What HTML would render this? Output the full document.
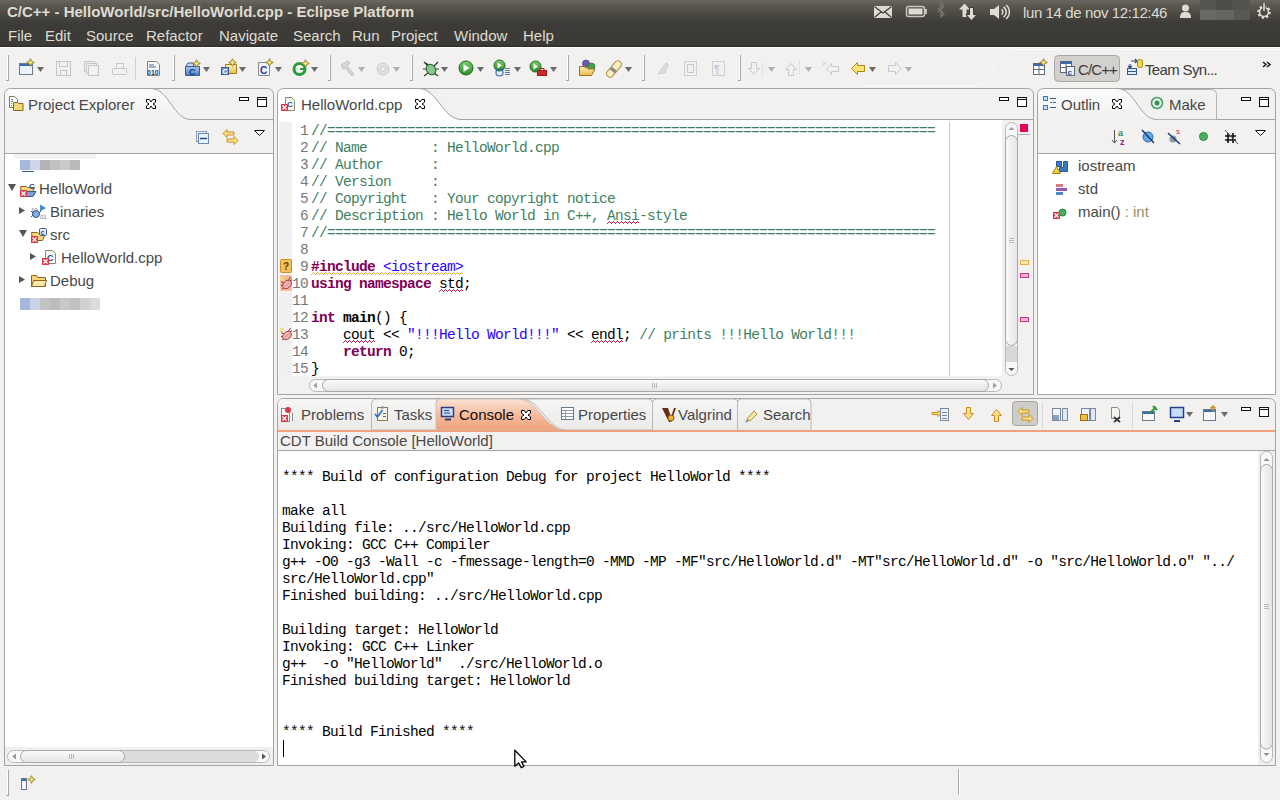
<!DOCTYPE html>
<html><head><meta charset="utf-8">
<style>
*{margin:0;padding:0;box-sizing:border-box}
html,body{width:1280px;height:800px;overflow:hidden;background:#f2f1f0;font-family:"Liberation Sans",sans-serif;font-size:15px;color:#484848}
.a{position:absolute}
.t{position:absolute;white-space:pre;line-height:1}
svg{position:absolute;overflow:visible}
#titlebar{left:0;top:0;width:1280px;height:47px;background:linear-gradient(#6a6661 0px,#5a574e 6px,#4a4943 14px,#3e3d39 22px,#3c3b37 26px,#3c3b37 45px,#302f2c 46px,#302f2c 47px)}
#title{left:7px;top:4px;font-weight:bold;font-size:15px;color:#dfdbd2}
.menu{top:28px;color:#dfdbd2;font-size:15px}
.panel{position:absolute;border:1px solid #a3a3a3;border-radius:6px 6px 0 0;background:#f2f1f0}
.hl{position:absolute;height:1px;background:#a3a3a3}
.vl{position:absolute;width:1px;background:#a3a3a3}
.white{position:absolute;background:#fff}
.code{position:absolute;white-space:pre;font-family:"Liberation Mono",monospace;font-size:14.5px;letter-spacing:-0.7px;line-height:17px;color:#000}
.tab{color:#484848}
.ln{color:#787878}
.cm{color:#3f7f5f}
.kw{color:#7f0055;font-weight:bold}
.st{color:#2a00ff}
.b{font-weight:bold}
.sq{}
.sqy{}
</style></head><body>
<div id="titlebar" class="a"></div><div class="a" style="left:0;top:47px;width:1280px;height:1px;background:#fbfbfa"></div>
<div id="title" class="t">C/C++ - HelloWorld/src/HelloWorld.cpp - Eclipse Platform</div>
<div class="t menu" style="left:8px">File</div>
<div class="t menu" style="left:45px">Edit</div>
<div class="t menu" style="left:86px">Source</div>
<div class="t menu" style="left:146px">Refactor</div>
<div class="t menu" style="left:219px">Navigate</div>
<div class="t menu" style="left:293px">Search</div>
<div class="t menu" style="left:352px">Run</div>
<div class="t menu" style="left:391px">Project</div>
<div class="t menu" style="left:454px">Window</div>
<div class="t menu" style="left:523px">Help</div>


<!-- ============ TOOLBAR ============ -->
<svg style="left:0;top:0" width="1280" height="90">
<defs>
 <linearGradient id="gGreen" x1="0" y1="0" x2="0" y2="1"><stop offset="0" stop-color="#7fcf6f"/><stop offset="1" stop-color="#2a8a2a"/></linearGradient>
 <linearGradient id="gFold" x1="0" y1="0" x2="0" y2="1"><stop offset="0" stop-color="#fff2b8"/><stop offset="1" stop-color="#e9b850"/></linearGradient>
 <linearGradient id="gBlue" x1="0" y1="0" x2="0" y2="1"><stop offset="0" stop-color="#a8c8f0"/><stop offset="1" stop-color="#4a78c0"/></linearGradient>
 <g id="dd"><path d="M0 0h7l-3.5 5z" fill="#6a6a6a"/></g>
 <g id="ddl"><path d="M0 0h7l-3.5 5z" fill="#b0b0b0"/></g>
 <g id="star"><path d="M3.5 -0.3L4.7 2.3 7.3 3.5 4.7 4.7 3.5 7.3 2.3 4.7 -0.3 3.5 2.3 2.3Z" fill="#fde676" stroke="#8a7a30" stroke-width="0.9" stroke-linejoin="round"/></g>
</defs>
<!-- handles/separators -->
<rect x="7" y="55" width="1" height="25" fill="#fff"/><rect x="8" y="55" width="1" height="26" fill="#a8a8a8"/><rect x="6" y="80" width="2" height="1" fill="#a8a8a8"/>
<rect x="173" y="55" width="1" height="25" fill="#fff"/><rect x="174" y="55" width="1" height="26" fill="#a8a8a8"/><rect x="172" y="80" width="2" height="1" fill="#a8a8a8"/>
<rect x="329" y="55" width="1" height="25" fill="#fff"/><rect x="330" y="55" width="1" height="26" fill="#a8a8a8"/><rect x="328" y="80" width="2" height="1" fill="#a8a8a8"/>
<rect x="411" y="55" width="1" height="25" fill="#fff"/><rect x="412" y="55" width="1" height="26" fill="#a8a8a8"/><rect x="410" y="80" width="2" height="1" fill="#a8a8a8"/>
<rect x="567" y="55" width="1" height="25" fill="#fff"/><rect x="568" y="55" width="1" height="26" fill="#a8a8a8"/><rect x="566" y="80" width="2" height="1" fill="#a8a8a8"/>
<rect x="643" y="55" width="1" height="25" fill="#fff"/><rect x="644" y="55" width="1" height="26" fill="#a8a8a8"/><rect x="642" y="80" width="2" height="1" fill="#a8a8a8"/>
<rect x="739" y="55" width="1" height="25" fill="#fff"/><rect x="740" y="55" width="1" height="26" fill="#a8a8a8"/><rect x="738" y="80" width="2" height="1" fill="#a8a8a8"/>
<path d="M135.5 57v23" stroke="#d0d0d0"/>
<!-- new -->
<rect x="19.5" y="63.5" width="13" height="11" fill="#eaf2fb" stroke="#6c7c8c"/>
<rect x="20" y="64" width="12" height="2" fill="#3a6ab0"/>
<use href="#star" x="27" y="59"/>
<use href="#dd" x="37" y="67"/>
<!-- save disabled -->
<rect x="56.5" y="61.5" width="14" height="14" fill="none" stroke="#c6c6c6"/>
<rect x="59.5" y="61.5" width="8" height="5" fill="none" stroke="#c6c6c6"/>
<rect x="60.5" y="70.5" width="6" height="5" fill="none" stroke="#c6c6c6"/>
<!-- save all -->
<rect x="84.5" y="61.5" width="10" height="10" fill="none" stroke="#c6c6c6"/>
<rect x="86.5" y="63.5" width="10" height="10" fill="#f2f1f0" stroke="#c6c6c6"/>
<rect x="88.5" y="65.5" width="10" height="10" fill="#f2f1f0" stroke="#c6c6c6"/>
<!-- print -->
<rect x="112.5" y="68.5" width="14" height="6" rx="1" fill="none" stroke="#c6c6c6"/>
<rect x="116.5" y="63.5" width="7" height="5" fill="none" stroke="#c6c6c6"/>
<!-- 010 -->
<path d="M147.5 61.5h9l3 3v11h-12z" fill="#f6f8fc" stroke="#8a8a70"/>
<path d="M149 65h5M149 67h7" stroke="#4a6aa0"/>
<text x="147" y="75" font-family="Liberation Sans" font-weight="bold" font-size="7" fill="#1a3a7a">010</text>
<!-- new c project -->
<path d="M185.5 66.5h14v9h-14z" fill="url(#gBlue)" stroke="#3a5a9a"/>
<path d="M186 66l2-3h5l1 3" fill="#c8d8f0" stroke="#3a5a9a"/>
<text x="189" y="75" font-family="Liberation Sans" font-weight="bold" font-size="9" fill="#1a3a8a">C</text>
<use href="#star" x="193" y="60"/>
<use href="#dd" x="203" y="67"/>
<!-- new source folder -->
<path d="M225.5 64.5h11v9h-11z" fill="url(#gFold)" stroke="#a07a20"/>
<rect x="221.5" y="67.5" width="7" height="7" fill="#7a9ad8" stroke="#3a5a9a"/>
<text x="222.5" y="74" font-family="Liberation Sans" font-weight="bold" font-size="7" fill="#fff">C</text>
<use href="#star" x="229" y="59"/>
<use href="#dd" x="239" y="67"/>
<!-- new c file -->
<path d="M258.5 62.5h8l3 3v10h-11z" fill="#eef2fa" stroke="#8a8a8a"/>
<text x="260" y="74" font-family="Liberation Sans" font-weight="bold" font-size="10" fill="#2a3aa0">C</text>
<use href="#star" x="266" y="59"/>
<use href="#dd" x="275" y="67"/>
<!-- new class -->
<circle cx="299.5" cy="69" r="5.5" fill="none" stroke="#2a9a3a" stroke-width="3"/>
<path d="M300 69h5" stroke="#2a9a3a" stroke-width="2"/>
<use href="#star" x="302" y="60"/>
<use href="#dd" x="311" y="67"/>
<!-- hammer disabled -->
<path d="M341 65l6-4 3 2-3 3 7 8-2 2-7-8-2 1z" fill="#d6d6d6" stroke="#c4c4c4"/>
<use href="#ddl" x="358" y="67"/>
<circle cx="383" cy="69" r="6" fill="#e0e0e0" stroke="#cccccc"/>
<circle cx="383" cy="69" r="2.5" fill="#f2f1f0" stroke="#cccccc"/>
<use href="#ddl" x="393" y="67"/>
<!-- bug -->
<path d="M424 62l4 4M438 62l-4 4M423 69h4M435 69h4M424 76l4-3M438 76l-4-3M426 63l2 2" stroke="#2a3a3a" stroke-width="1.2"/>
<ellipse cx="431" cy="69.5" rx="4.5" ry="5.5" transform="rotate(-35 431 69.5)" fill="#8ac88a" stroke="#2a5a3a"/>
<use href="#dd" x="441" y="67"/>
<!-- run -->
<circle cx="466" cy="68" r="7" fill="url(#gGreen)" stroke="#1a6a1a"/>
<path d="M463.5 64v8l6-4z" fill="#fff"/>
<use href="#dd" x="477" y="67"/>
<!-- profile -->
<circle cx="499.5" cy="65.5" r="5.5" fill="url(#gGreen)" stroke="#1a6a1a"/>
<path d="M497.5 62.5v6l4.5-3z" fill="#fff"/>
<circle cx="499.5" cy="72.5" r="3.5" fill="none" stroke="#2a6ac0" stroke-width="1.2"/>
<path d="M505 68.5h5M505 70.5h5M505 72.5h5M505 74.5h5" stroke="#5a7ab0"/>
<use href="#dd" x="514" y="67"/>
<!-- ext tools -->
<circle cx="535.5" cy="66.5" r="5.5" fill="url(#gGreen)" stroke="#1a6a1a"/>
<path d="M533.5 63.5v6l4.5-3z" fill="#fff"/>
<rect x="537.5" y="70.5" width="9" height="5" fill="#d02a2a" stroke="#a01a1a"/>
<path d="M540 70v-1.5h4v1.5" fill="none" stroke="#a01a1a"/>
<use href="#dd" x="550" y="67"/>
<!-- open folder with spheres -->
<circle cx="586" cy="63.5" r="3.5" fill="#6a5ab0" stroke="#3a2a80" stroke-width="0.6"/>
<circle cx="591.5" cy="66.5" r="3.5" fill="#4aa04a" stroke="#1a6a1a" stroke-width="0.6"/>
<path d="M579.5 66.5h5l1 1.5h3l-0.5 1h7l-3.5 6.5h-12z" fill="url(#gFold)" stroke="#9a7020"/>
<!-- pen -->
<g transform="rotate(-50 614 69)"><rect x="604.5" y="65.5" width="19" height="7" rx="3.5" fill="#fbeec0" stroke="#b09048"/><rect x="611" y="66" width="3.5" height="6" fill="#8a8a8a"/></g>
<use href="#dd" x="625" y="67"/>
<!-- disabled editor tools -->
<path d="M658 74l8-11 2 1-3 9z" fill="#dcdcdc" stroke="#d0d0d0"/>
<rect x="684.5" y="61.5" width="12" height="14" fill="none" stroke="#d0d0d0"/>
<rect x="687.5" y="64.5" width="6" height="8" fill="none" stroke="#c8c8c8"/>
<rect x="712.5" y="61.5" width="12" height="14" fill="none" stroke="#d0d0d0"/>
<text x="714" y="73" font-family="Liberation Sans" font-weight="bold" font-size="10" fill="#c8c8c8">¶</text>
<!-- next/prev annotation disabled -->
<path d="M751.5 62.5h5v6h3l-5.5 6-5.5-6h3z" fill="none" stroke="#c8c8c8"/>
<path d="M762.5 63v13" stroke="#d0d0d0" stroke-dasharray="1 1"/>
<use href="#ddl" x="768" y="67"/>
<path d="M788.5 75.5h5v-6h3l-5.5-6-5.5 6h3z" fill="none" stroke="#c8c8c8"/>
<path d="M799.5 61v13" stroke="#d0d0d0" stroke-dasharray="1 1"/>
<use href="#ddl" x="805" y="67"/>
<path d="M826.5 68.5l5-5v3h7v5h-7v3z" fill="none" stroke="#c8c8c8"/>
<path d="M823 62l3 3M826 62l-3 3" stroke="#c8c8c8"/>
<!-- back -->
<path d="M851.5 68.5l6-6v3h7v6h-7v3z" fill="#ffe27a" stroke="#b08a10"/>
<use href="#dd" x="869" y="67"/>
<path d="M901.5 68.5l-6-6v3h-7v6h7v3z" fill="none" stroke="#c8c8c8"/>
<use href="#ddl" x="905" y="67"/>
</svg>


<!-- ============ TRAY ============ -->
<svg style="left:0;top:0" width="1280" height="24">
<rect x="874.5" y="6.5" width="17" height="11" rx="1" fill="#dfdbd2" stroke="#dfdbd2"/>
<path d="M875 7l8 6 8-6M875 17l6-5M891 17l-6-5" fill="none" stroke="#3c3b37" stroke-width="1.2"/>
<rect x="906.5" y="6.5" width="18" height="10" rx="2" fill="none" stroke="#c8c4bc" stroke-width="1.5"/>
<rect x="908.5" y="8.5" width="14" height="6" fill="#dfdbd2"/>
<rect x="925" y="9" width="2" height="5" fill="#c8c4bc"/>
<path d="M938 8l6 6-3 3v-14l3 3-6 6" fill="none" stroke="#7a7872" stroke-width="1.3"/>
<path d="M959 9.5L964.5 3.5 970 9.5H966.5V17H962.5V9.5Z" fill="#dfdbd2"/>
<path d="M966 14.5L971.5 20.5 977 14.5H973.5V7.5H969.5V14.5Z" fill="#dfdbd2" stroke="#3c3b37" stroke-width="1"/>
<path d="M990 9h4l5-4v14l-5-4h-4z" fill="#dfdbd2"/>
<path d="M1001.5 9.5a3 3 0 0 1 0 5M1003.5 7a6 6 0 0 1 0 10M1006 5a9 9 0 0 1 0 14" fill="none" stroke="#dfdbd2" stroke-width="1.5"/>
<circle cx="1185.5" cy="8" r="3.5" fill="#dfdbd2"/>
<path d="M1180 18c0-5 2-6 5.5-6s5.5 1 5.5 6z" fill="#dfdbd2"/>
<rect x="1200" y="0" width="16" height="10" fill="#57554f"/><rect x="1216" y="0" width="16" height="10" fill="#4e4c47"/><rect x="1232" y="0" width="18" height="10" fill="#55534e"/>
<rect x="1200" y="10" width="16" height="10" fill="#6a6862"/><rect x="1216" y="10" width="18" height="10" fill="#66645e"/><rect x="1234" y="10" width="16" height="10" fill="#5a5853"/>
<circle cx="1264" cy="12" r="5.5" fill="none" stroke="#dfdbd2" stroke-width="2.6" stroke-dasharray="2.2 2"/>
<circle cx="1264" cy="12" r="4.5" fill="none" stroke="#dfdbd2" stroke-width="1.6"/>
<path d="M1264 3v8" stroke="#3c3b37" stroke-width="3"/><path d="M1264 3v8" stroke="#dfdbd2" stroke-width="1.6"/>
</svg>
<div class="t" style="left:1023px;top:5px;color:#dfdbd2;font-size:15px;letter-spacing:-0.39px">lun 14 de nov 12:12:46</div>

<!-- ============ PERSPECTIVES ============ -->
<svg style="left:0;top:0" width="1280" height="90">
<path d="M860 85.5h116c18 0 16-36 36-36h268" fill="none" stroke="#fafafa" stroke-width="1"/>
<rect x="1033.5" y="63.5" width="11" height="11" fill="#fff" stroke="#5a6a7a"/>
<rect x="1034" y="64" width="10" height="2" fill="#3a6ab0"/><path d="M1039 66v8M1034 69.5h10" stroke="#5a6a7a"/>
<use href="#star" x="1040" y="59"/>
<rect x="1054.5" y="55.5" width="65" height="26" rx="4" fill="#d3d1cd" stroke="#a9a7a3"/>
<rect x="1060.5" y="61.5" width="11" height="11" fill="#fff" stroke="#5a6a7a"/>
<rect x="1061" y="62" width="10" height="2" fill="#3a6ab0"/><path d="M1066 64v8M1061 67.5h10" stroke="#5a6a7a"/>
<rect x="1066.5" y="66.5" width="8" height="9" fill="#eef2fa" stroke="#5a6a7a"/>
<text x="1067.5" y="74.5" font-family="Liberation Sans" font-weight="bold" font-size="8" fill="#2a4aa0">c</text>
<path d="M1131 61h6M1135 59l2 2-2 2M1130 64v3M1128 66l2 2 2-2" fill="none" stroke="#2a4a8a" stroke-width="1.2"/>
<rect x="1127.5" y="68.5" width="9" height="6" fill="#dde8f8" stroke="#3a5a8a"/><path d="M1128 71.5h8" stroke="#3a5a8a"/>
<rect x="1137.5" y="59.5" width="5" height="8" rx="2" fill="#f0d840" stroke="#a08a10"/>
<path d="M1263 62l3 2.5-3 2.5M1267 62l3 2.5-3 2.5" fill="none" stroke="#222" stroke-width="1.6"/>
</svg>
<div class="t" style="left:1078px;top:62px;color:#3c3c3c;letter-spacing:-0.9px">C/C++</div>
<div class="t" style="left:1145px;top:62px;color:#3c3c3c;letter-spacing:-0.65px">Team Syn...</div>

<!-- ============ PANEL SHAPES ============ -->
<svg style="left:0;top:0" width="1280" height="800">
<defs>
 <g id="cx"><path d="M0.5 0.5H3.2L5 3 6.8 0.5H9.5V3.2L7 5 9.5 6.8V9.5H6.8L5 7 3.2 9.5H0.5V6.8L3 5 0.5 3.2z" fill="#fff" stroke="#000" stroke-width="1"/></g>
 <g id="cxg"><path d="M0.5 0.5H3.2L5 3 6.8 0.5H9.5V3.2L7 5 9.5 6.8V9.5H6.8L5 7 3.2 9.5H0.5V6.8L3 5 0.5 3.2z" fill="#fff" stroke="#444" stroke-width="0.9"/></g>
 <g id="mn"><rect x="0.5" y="0.5" width="9" height="3" fill="#fff" stroke="#111"/></g>
 <g id="mx"><rect x="0.5" y="0.5" width="9" height="9" fill="#fff" stroke="#111"/><path d="M1 2.5h8" stroke="#111"/></g>
 <g id="vm"><path d="M0.5 0.5h10l-5 5z" fill="#fff" stroke="#111"/></g>
 <g id="tri_r"><path d="M0 0l6 3.5-6 3.5z" fill="#555"/></g>
 <g id="tri_d"><path d="M0 0h8l-4 7z" fill="#555"/></g>
 <g id="errx"><rect x="0" y="0" width="7" height="7" fill="#d83a4a"/><path d="M1.5 1.5l4 4M5.5 1.5l-4 4" stroke="#fff" stroke-width="1.2"/></g>
 <linearGradient id="gTab" x1="0" y1="0" x2="0" y2="1"><stop offset="0" stop-color="#fbfbfb"/><stop offset="1" stop-color="#f2f1f0"/></linearGradient>
 <linearGradient id="gOrange" x1="0" y1="0" x2="0" y2="1"><stop offset="0" stop-color="#fbe2d4"/><stop offset="0.5" stop-color="#f6bd9e"/><stop offset="1" stop-color="#f0a07a"/></linearGradient>
 <linearGradient id="gInTab" x1="0" y1="0" x2="0" y2="1"><stop offset="0" stop-color="#f6f6f5"/><stop offset="1" stop-color="#ebeae8"/></linearGradient>
 <linearGradient id="gThumbV" x1="0" y1="0" x2="1" y2="0"><stop offset="0" stop-color="#fafafa"/><stop offset="1" stop-color="#e4e4e4"/></linearGradient>
 <linearGradient id="gThumbH" x1="0" y1="0" x2="0" y2="1"><stop offset="0" stop-color="#fafafa"/><stop offset="1" stop-color="#e4e4e4"/></linearGradient>
</defs>

<!-- Project Explorer panel -->
<path d="M4.5 765.5V94.5a6 6 0 0 1 6-6h257a6 6 0 0 1 6 6v671z" fill="#f2f1f0" stroke="#a3a3a3"/>
<path d="M5 119V95a6 6 0 0 1 6-6h140c18 0 22 30 40 30z" fill="url(#gTab)"/>
<path d="M151 88.5c18 0 22 31 40 31h82" fill="none" stroke="#a3a3a3"/>
<path d="M5 153.5h268" stroke="#a3a3a3"/>
<rect x="5" y="154" width="268" height="593" fill="#fff"/>
<!-- h scrollbar -->
<rect x="5" y="747" width="268" height="18" fill="#f0f0f0"/>
<rect x="7.5" y="750.5" width="262" height="12" rx="6" fill="#f8f8f8" stroke="#b8b8b8"/>
<rect x="120" y="751" width="139" height="11" rx="5" fill="#dcdcdc"/>
<rect x="20.5" y="750.5" width="104" height="12" rx="6" fill="url(#gThumbH)" stroke="#a8a8a8"/>
<path d="M12 756.5l4-3v6z" fill="#9a9a9a"/><path d="M266 756.5l-4-3v6z" fill="#555"/>
<path d="M69.5 754v5M71.5 754v5M73.5 754v5" stroke="#b8b8b8"/>
<use href="#cx" x="146" y="99"/>
<use href="#mn" x="239" y="97"/>
<use href="#mx" x="257" y="97"/>
<use href="#vm" x="254" y="130"/>
<!-- PE tab icon -->
<path d="M9.5 96.5h5l3 3v8h-8z" fill="#fff" stroke="#7a7a60"/>
<path d="M11 99.5h2M11 101.5h2M11 103.5h1M11 105.5h1" stroke="#6a7aa0"/>
<path d="M13.5 102.5h4l1 1h4.5v7h-9.5z" fill="#f6d878" stroke="#8a6420"/>
<!-- collapse all -->
<rect x="196.5" y="131.5" width="10" height="10" fill="#e8f0f8" stroke="#8aa0c0"/>
<rect x="198.5" y="133.5" width="10" height="10" fill="#e8f4fc" stroke="#6a88b0"/>
<path d="M200 138.5h7" stroke="#2a4a7a" stroke-width="1.5"/>
<!-- link with editor -->
<path d="M223 133.5l4-4v2.5h7v3h-7v2.5z" fill="#fde08a" stroke="#c89020"/>
<path d="M238 140.5l-4-4v2.5h-7v3h7v2.5z" fill="#fde08a" stroke="#c89020"/>
<!-- tree -->
<rect x="14" y="154" width="82" height="5" fill="#f4f4f4"/>
<rect x="20" y="160" width="10" height="10" fill="#a8b8dc"/><rect x="30" y="160" width="10" height="10" fill="#cdd6e8"/><rect x="40" y="160" width="10" height="10" fill="#b4b4b4"/><rect x="50" y="160" width="10" height="10" fill="#c2c2c2"/><rect x="60" y="160" width="10" height="10" fill="#cacaca"/><rect x="70" y="160" width="10" height="10" fill="#bababa"/>
<path d="M22 171.5h12" stroke="#3a5a9a"/>
<use href="#tri_d" x="8" y="184"/>
<path d="M20.5 186.5h6l1 1h7l-3 7h-10z" fill="#f6d878" stroke="#8a6420"/><path d="M23 191.5h13l-3 5h-10z" fill="#7aa0d8" stroke="#3a5a9a"/>
<text x="29" y="189" font-family="Liberation Sans" font-weight="bold" font-size="8" fill="#2a4aa0">C</text>
<use href="#errx" x="20" y="190"/>
<use href="#tri_r" x="19" y="207"/>
<text x="31" y="212" font-family="Liberation Sans" font-size="6" fill="#6a7a9a">10</text>
<path d="M40 204.5l6 3.5-6 3.5z" fill="#4a8ad0"/>
<circle cx="36" cy="214" r="3.5" fill="#8ab0d8" stroke="#2a5a9a"/>
<path d="M31 211l2 2M31 217l2-2M41 211l-2 2" stroke="#2a5a9a"/>
<text x="40" y="219" font-family="Liberation Sans" font-size="6" fill="#6a7a9a">01</text>
<use href="#tri_d" x="19" y="230"/>
<path d="M31.5 232.5h6l1 1h7l-3 7h-10z" fill="#f6d878" stroke="#8a6420"/>
<rect x="39.5" y="228.5" width="7" height="7" rx="1" fill="#e8eef8" stroke="#3a5a9a"/>
<text x="40.5" y="235" font-family="Liberation Sans" font-weight="bold" font-size="7" fill="#2a4aa0">c</text>
<use href="#errx" x="31" y="236"/>
<use href="#tri_r" x="30" y="253"/>
<path d="M45.5 250.5h7l3 3v10h-10z" fill="#f8f8f4" stroke="#8a8a70"/>
<text x="47" y="261" font-family="Liberation Sans" font-weight="bold" font-size="9" fill="#2a4aa0">C</text>
<use href="#errx" x="42" y="258"/>
<use href="#tri_r" x="19" y="276"/>
<path d="M31.5 275.5h5l1 2h8v9h-14z" fill="#f6d878" stroke="#8a6420"/><path d="M33.5 280.5h13l-2 6h-13z" fill="#fbe8a8" stroke="#8a6420"/>
<rect x="20" y="298" width="10" height="12" fill="#a8b8dc"/><rect x="30" y="298" width="10" height="12" fill="#c8d2e8"/><rect x="40" y="298" width="10" height="12" fill="#c4c4c4"/><rect x="50" y="298" width="10" height="12" fill="#bcbcbc"/><rect x="60" y="298" width="10" height="12" fill="#c8c8c8"/><rect x="70" y="298" width="10" height="12" fill="#c0c0c0"/><rect x="80" y="298" width="10" height="12" fill="#d0d0d0"/><rect x="90" y="298" width="10" height="12" fill="#dadada"/>

<!-- Editor panel -->
<path d="M277.5 394.5V94.5a6 6 0 0 1 6-6h744a6 6 0 0 1 6 6v300z" fill="#f2f1f0" stroke="#a3a3a3"/>
<path d="M278 120V95a6 6 0 0 1 6-6h135c18 0 24 31 42 31z" fill="#fff"/>
<path d="M419 88.5c18 0 24 31 42 31h572" fill="none" stroke="#a3a3a3"/>
<rect x="278" y="120" width="724" height="256" fill="#fff"/>
<rect x="279" y="122" width="13" height="254" fill="#f0f0f0"/>
<path d="M949.5 122v254" stroke="#c8c8c8"/>
<use href="#cx" x="415" y="99"/>
<use href="#mn" x="999" y="97"/>
<use href="#mx" x="1017" y="97"/>
<!-- editor tab icon -->
<path d="M285.5 97.5h6l3 3v10h-9z" fill="#fbfbf6" stroke="#8a8a70"/>
<text x="287" y="107" font-family="Liberation Sans" font-weight="bold" font-size="8" fill="#2a4aa0">C</text>
<use href="#errx" x="281" y="104"/>
<!-- v scrollbar -->
<rect x="1005.5" y="122.5" width="12" height="253" rx="6" fill="#f8f8f8" stroke="#b8b8b8"/>
<rect x="1005.5" y="135.5" width="12" height="210" rx="6" fill="url(#gThumbV)" stroke="#a8a8a8"/>
<rect x="1006" y="346" width="11" height="16" fill="#d8d8d8"/>
<path d="M1011.5 127l-3 3h6z" fill="#a0a0a0"/><path d="M1011.5 371l-3-3h6z" fill="#555"/>
<path d="M1009 238.5h5M1009 240.5h5M1009 242.5h5" stroke="#b8b8b8"/>
<!-- h scrollbar -->
<rect x="309.5" y="379.5" width="692" height="12" rx="6" fill="#f8f8f8" stroke="#b8b8b8"/>
<rect x="322.5" y="379.5" width="666" height="12" rx="6" fill="url(#gThumbH)" stroke="#a8a8a8"/>
<path d="M313 385.5l4-3v6z" fill="#a0a0a0"/><path d="M997 385.5l-4-3v6z" fill="#a0a0a0"/>
<path d="M652.5 383v5M654.5 383v5M656.5 383v5" stroke="#b8b8b8"/>
<!-- overview ruler -->
<rect x="1020" y="124" width="8" height="8" fill="#e6005c"/>
<path d="M1018 134.5h12" stroke="#a8b0b0"/>
<rect x="1020.5" y="260.5" width="8" height="4" fill="#fde8b0" stroke="#e8b040"/>
<rect x="1020.5" y="273.5" width="8" height="4" fill="#f8b8d8" stroke="#d03080"/>
<rect x="1020.5" y="317.5" width="8" height="4" fill="#f8b8d8" stroke="#d03080"/>
<!-- left annotations -->
<rect x="280.5" y="259.5" width="11" height="13" rx="1" fill="#f6c058" stroke="#c89030"/>
<text x="283" y="270" font-family="Liberation Sans" font-weight="bold" font-size="10" fill="#5a4010">?</text>
<rect x="280" y="275" width="12" height="16" fill="#f2b89a"/>
<rect x="280" y="275" width="12" height="16" fill="none" stroke="#fff" stroke-width="1" stroke-dasharray="1 1" opacity="0.6"/>
<g id="bugE">
<path d="M281 281.5l3 1.5M281 285.5h3M282 289l2.5-2M290.5 277l-2 3M292 279.5l-3 2" stroke="#8a2a2a" stroke-width="0.9"/>
<ellipse cx="287" cy="284.5" rx="3.6" ry="5" transform="rotate(50 287 284.5)" fill="#f2b4b4" stroke="#a03838" stroke-width="0.9"/>
<path d="M284.5 286.5l5-4" stroke="#c87878" stroke-width="0.7"/>
</g>
<rect x="280" y="277" width="4" height="4" fill="#f8d878" opacity="0.8"/>
<use href="#bugE" x="0" y="51"/>
<rect x="280" y="328" width="4" height="4" fill="#f8d878" opacity="0.8"/>

<!-- Outline panel -->
<path d="M1037.5 394.5V94.5a6 6 0 0 1 6-6h226a6 6 0 0 1 6 6v300z" fill="#f2f1f0" stroke="#a3a3a3"/>
<path d="M1038 119V95a6 6 0 0 1 6-6h74c18 0 21 30 39 30z" fill="url(#gTab)"/>
<path d="M1117 88.5c18 0 22 31 40 31h118" fill="none" stroke="#a3a3a3"/>
<path d="M1157 119.5h59.5V94.5a5 5 0 0 0-5-5h-90" fill="none" stroke="#b4b4b4"/>
<path d="M1038 153.5h237" stroke="#a3a3a3"/>
<rect x="1038" y="154" width="237" height="240" fill="#fff"/>
<use href="#cx" x="1112" y="99"/>
<use href="#mn" x="1241" y="97"/>
<use href="#mx" x="1259" y="97"/>
<use href="#vm" x="1255" y="130"/>
<!-- outline tab icon -->
<rect x="1043.5" y="96.5" width="4" height="4" fill="#bfe0f8" stroke="#3a7ac0"/>
<rect x="1043.5" y="105.5" width="4" height="4" fill="#bfe0f8" stroke="#3a7ac0"/>
<path d="M1050 98.5h6M1050 102.5h2M1053 102.5h3M1050 107.5h6" stroke="#3a5a8a"/>
<circle cx="1157" cy="103" r="5.5" fill="none" stroke="#3aa060" stroke-width="1.5"/>
<circle cx="1157" cy="103" r="2.5" fill="#2a9a50"/>
<!-- outline toolbar -->
<path d="M1114.5 130v13M1112 140l2.5 3 2.5-3" fill="none" stroke="#555"/>
<text x="1118" y="136" font-family="Liberation Sans" font-weight="bold" font-size="9" fill="#2a8a6a">a</text>
<text x="1120" y="145" font-family="Liberation Sans" font-weight="bold" font-size="9" fill="#8a2a8a">z</text>
<circle cx="1148" cy="137" r="5" fill="#6aa8e0" stroke="#2a6aaa"/>
<path d="M1142 130l12 13" stroke="#1a3a7a" stroke-width="1.5"/>
<circle cx="1173" cy="139" r="3.5" fill="#8a9aaa"/>
<text x="1176" y="134" font-family="Liberation Sans" font-size="8" fill="#c02a5a">s</text>
<path d="M1168 133l12 11" stroke="#1a3a7a" stroke-width="1.5"/>
<circle cx="1203.5" cy="136.5" r="4" fill="#4ab060" stroke="#2a8a40"/>
<path d="M1228 133v10M1233 133v10M1225 136h11M1225 140h11" stroke="#111" stroke-width="1.6"/>
<path d="M1225 130l13 14" stroke="#555"/>
<!-- outline items -->
<rect x="1056.5" y="161.5" width="5" height="5" fill="#3a7ac0" stroke="#2a5aa0"/>
<path d="M1063.5 161.5h4v10h-8v-4h4z" fill="#3a7ac0" stroke="#2a5aa0"/>
<path d="M1056.5 166.5l4 7h-8z" fill="#f4d040" stroke="#a08010"/>
<rect x="1056" y="184" width="7" height="3" fill="#d87888"/>
<rect x="1056" y="188" width="11" height="3" fill="#9a5ab0"/>
<rect x="1056" y="192" width="7" height="3" fill="#4a8ac8"/>
<circle cx="1062.5" cy="212.5" r="3.5" fill="#4ab060" stroke="#2a7a40"/>
<use href="#errx" x="1053" y="212"/>

<!-- Console panel -->
<path d="M277.5 765.5V404.5a6 6 0 0 1 6-6h986a6 6 0 0 1 6 6v361z" fill="#f2f1f0" stroke="#a3a3a3"/>
<!-- inactive tabs -->
<path d="M278 430V404a5 5 0 0 1 5-5h88v31z" fill="url(#gInTab)"/>
<path d="M371.5 430V404a5 5 0 0 1 5-5h60v31z" fill="url(#gInTab)" stroke="#b8b8b8"/>
<path d="M566 430c-18 0-26-31-44-31h126.5a4 4 0 0 1 4 4V430z" fill="url(#gInTab)" stroke="#b8b8b8"/>
<path d="M652.5 430V403a4 4 0 0 1 4-4h77.5a4 4 0 0 1 4 4v27" fill="url(#gInTab)" stroke="#b8b8b8"/>
<path d="M737.5 430V403a4 4 0 0 1 4-4h65.5a4 4 0 0 1 4 4v27" fill="url(#gInTab)" stroke="#b8b8b8"/>
<!-- active console tab -->
<path d="M436 430V404a5 5 0 0 1 5-5h77c20 0 26 31 48 31z" fill="url(#gOrange)" stroke="#c8c0b8"/>
<rect x="278" y="430" width="997" height="2" fill="#f0a07a"/>
<path d="M278 450.5h997" stroke="#a3a3a3"/>
<rect x="278" y="451" width="997" height="314" fill="#fff"/>
<!-- console v scrollbar -->
<rect x="1258" y="451" width="17" height="314" fill="#f0f0f0" stroke="none"/>
<rect x="1260.5" y="451.5" width="12" height="311" rx="6" fill="#f8f8f8" stroke="#b8b8b8"/>
<rect x="1260.5" y="464.5" width="12" height="284.5" rx="6" fill="url(#gThumbV)" stroke="#a8a8a8"/>
<path d="M1266.5 458l-3 3h6z" fill="#909090"/><path d="M1266.5 756l-3-3h6z" fill="#909090"/>
<path d="M1264 604.5h5M1264 606.5h5M1264 608.5h5" stroke="#b8b8b8"/>
<use href="#mn" x="1241" y="407"/>
<use href="#mx" x="1259" y="407"/>
<use href="#cx" x="521" y="410"/>
<!-- console tab icons -->
<rect x="281.5" y="408.5" width="8" height="13" fill="#f8f8f8" stroke="#8a8a8a"/>
<circle cx="288" cy="410" r="3" fill="#d83a4a"/>
<path d="M292.5 413v8" stroke="#8a8a8a"/>
<use href="#errx" x="281" y="415"/>
<rect x="377.5" y="407.5" width="10" height="13" fill="#f8f4e8" stroke="#8a7a50"/>
<path d="M381 406.5h3v2h-3z" fill="#8a8a8a"/>
<path d="M375 414l2.5 3 5-7" fill="none" stroke="#2a6ad0" stroke-width="1.6"/>
<path d="M383 413.5h3M383 416.5h3" stroke="#5a6a8a"/>
<rect x="441.5" y="407.5" width="12" height="9" fill="#c8ddf5" stroke="#24408a" stroke-width="1.5"/>
<path d="M444 410.5h5M444 413h6" stroke="#24408a"/><path d="M445 419.5h6" stroke="#24408a" stroke-width="2"/>
<rect x="561.5" y="407.5" width="12" height="12" fill="#fff" stroke="#6a7a8a"/>
<path d="M562 410.5h11M562 413.5h11M562 416.5h11M565.5 410v9" stroke="#8a9aaa"/>
<path d="M662 408h6l3 9 3-9h2l-5 14h-2z" fill="#6a2a1a"/>
<circle cx="671" cy="418" r="3" fill="#f0b030" stroke="#8a5a10"/>
<path d="M747 419l7-8 3 3-7 7z" fill="#f8e8a0" stroke="#b09040"/><path d="M748 420l-2 2" stroke="#888" stroke-width="2"/>
<!-- console toolbar -->
<path d="M932 412.5h6v-2l3 3-3 3v-2h-6z" fill="#fde08a" stroke="#c89020"/>
<rect x="940.5" y="408.5" width="8" height="12" fill="#f0f4f8" stroke="#7a8a9a"/><path d="M942 412.5h5M942 415.5h5M942 418.5h5" stroke="#6a8ab0"/>
<path d="M966.5 407.5h4v6h3l-5 6-5-6h3z" fill="#fde08a" stroke="#c89020"/>
<path d="M994.5 421.5h4v-6h3l-5-6-5 6h3z" fill="#fde08a" stroke="#c89020"/>
<rect x="1012.5" y="401.5" width="25" height="24" rx="3" fill="#cfcdc9" stroke="#a6a4a0"/>
<path d="M1018 411.5l4-4v2.5h7v3h-7v2.5z" fill="#fde08a" stroke="#c89020"/>
<path d="M1033 418.5l-4-4v2.5h-7v3h7v2.5z" fill="#fde08a" stroke="#c89020"/>
<path d="M1042.5 402v26" stroke="#d8d8d8"/>
<rect x="1052.5" y="408.5" width="8" height="12" fill="#f0f4f8" stroke="#7a8a9a"/><rect x="1062.5" y="408.5" width="5" height="12" fill="#dde8f5" stroke="#7a8a9a"/>
<rect x="1053" y="415" width="6" height="5" fill="#8aa0c0"/>
<rect x="1081.5" y="408.5" width="8" height="12" fill="#f0f4f8" stroke="#7a8a9a"/><rect x="1090.5" y="408.5" width="5" height="12" fill="#dde8f5" stroke="#7a8a9a"/>
<rect x="1080.5" y="414.5" width="7" height="6" fill="#f0c040" stroke="#9a7010"/>
<path d="M1111.5 407.5h6l2 2v9h-8z" fill="#f4f4f0" stroke="#8a8a8a"/>
<path d="M1114 417l6 5M1120 417l-6 5" stroke="#3a3a3a" stroke-width="1.8"/>
<path d="M1132.5 402v26" stroke="#d8d8d8"/>
<rect x="1142.5" y="411.5" width="12" height="9" fill="#f8f8f8" stroke="#6a7a8a"/><path d="M1143 413h11" stroke="#3a6ab0" stroke-width="2"/>
<path d="M1150 413l6-6M1153 406l4 4" stroke="#2a9a3a" stroke-width="2"/>
<rect x="1170.5" y="407.5" width="13" height="10" fill="#c8ddf5" stroke="#24408a" stroke-width="1.5"/>
<path d="M1174 421h6" stroke="#24408a" stroke-width="2"/>
<use href="#dd" x="1186" y="412"/>
<rect x="1203.5" y="409.5" width="12" height="11" fill="#f4f8fc" stroke="#6a7a8a"/><rect x="1204" y="410" width="11" height="2" fill="#3a6ab0"/>
<path d="M1213 412v-6M1210.5 408.5l2.5-2.5 2.5 2.5" fill="none" stroke="#c89020" stroke-width="1.5"/>
<use href="#dd" x="1221" y="412"/>

<!-- status bar -->
<rect x="7" y="770" width="1" height="25" fill="#fff"/><rect x="8" y="770" width="1" height="26" fill="#a8a8a8"/><rect x="6" y="795" width="2" height="1" fill="#a8a8a8"/>
<rect x="21.5" y="778.5" width="5" height="11" fill="#f4f8fc" stroke="#6a7a8a"/><rect x="22" y="779" width="4" height="2" fill="#3a6ab0"/>
<use href="#star" x="28" y="776"/>
<path d="M958.5 769v26" stroke="#a8a8a8"/><path d="M959.5 769v26" stroke="#fff"/>
<!-- mouse cursor -->
<path d="M514.8 750.2V766.3L518.6 762.9 521.3 767.6 523.9 766.4 521.6 761.9H526.2Z" fill="#fff" stroke="#000" stroke-width="1.3" stroke-linejoin="round"/>
</svg>

<!-- ============ TEXTS ============ -->
<svg style="left:0;top:0" width="1280" height="800">
<path d="M607 223h1v1h-1zM608 222h1v1h-1zM609 221h1v1h-1zM610 222h1v1h-1zM611 223h1v1h-1zM612 222h1v1h-1zM613 221h1v1h-1zM614 222h1v1h-1zM615 223h1v1h-1zM616 222h1v1h-1zM617 221h1v1h-1zM618 222h1v1h-1zM619 223h1v1h-1zM620 222h1v1h-1zM621 221h1v1h-1zM622 222h1v1h-1zM623 223h1v1h-1zM624 222h1v1h-1zM625 221h1v1h-1zM626 222h1v1h-1zM627 223h1v1h-1zM628 222h1v1h-1zM629 221h1v1h-1zM630 222h1v1h-1zM631 223h1v1h-1zM632 222h1v1h-1zM633 221h1v1h-1zM634 222h1v1h-1zM635 223h1v1h-1zM636 222h1v1h-1zM637 221h1v1h-1zM638 222h1v1h-1z" fill="#c02858" shape-rendering="crispEdges"/>
<path d="M311 274h1v1h-1zM312 273h1v1h-1zM313 272h1v1h-1zM314 273h1v1h-1zM315 274h1v1h-1zM316 273h1v1h-1zM317 272h1v1h-1zM318 273h1v1h-1zM319 274h1v1h-1zM320 273h1v1h-1zM321 272h1v1h-1zM322 273h1v1h-1zM323 274h1v1h-1zM324 273h1v1h-1zM325 272h1v1h-1zM326 273h1v1h-1zM327 274h1v1h-1zM328 273h1v1h-1zM329 272h1v1h-1zM330 273h1v1h-1zM331 274h1v1h-1zM332 273h1v1h-1zM333 272h1v1h-1zM334 273h1v1h-1zM335 274h1v1h-1zM336 273h1v1h-1zM337 272h1v1h-1zM338 273h1v1h-1zM339 274h1v1h-1zM340 273h1v1h-1zM341 272h1v1h-1zM342 273h1v1h-1zM343 274h1v1h-1zM344 273h1v1h-1zM345 272h1v1h-1zM346 273h1v1h-1zM347 274h1v1h-1zM348 273h1v1h-1zM349 272h1v1h-1zM350 273h1v1h-1zM351 274h1v1h-1zM352 273h1v1h-1zM353 272h1v1h-1zM354 273h1v1h-1zM355 274h1v1h-1zM356 273h1v1h-1zM357 272h1v1h-1zM358 273h1v1h-1zM359 274h1v1h-1zM360 273h1v1h-1zM361 272h1v1h-1zM362 273h1v1h-1zM363 274h1v1h-1zM364 273h1v1h-1zM365 272h1v1h-1zM366 273h1v1h-1zM367 274h1v1h-1zM368 273h1v1h-1zM369 272h1v1h-1zM370 273h1v1h-1zM371 274h1v1h-1zM372 273h1v1h-1zM373 272h1v1h-1zM374 273h1v1h-1zM375 274h1v1h-1zM376 273h1v1h-1zM377 272h1v1h-1zM378 273h1v1h-1zM379 274h1v1h-1zM380 273h1v1h-1zM381 272h1v1h-1zM382 273h1v1h-1zM383 274h1v1h-1zM384 273h1v1h-1zM385 272h1v1h-1zM386 273h1v1h-1zM387 274h1v1h-1zM388 273h1v1h-1zM389 272h1v1h-1zM390 273h1v1h-1zM391 274h1v1h-1zM392 273h1v1h-1zM393 272h1v1h-1zM394 273h1v1h-1zM395 274h1v1h-1zM396 273h1v1h-1zM397 272h1v1h-1zM398 273h1v1h-1zM399 274h1v1h-1zM400 273h1v1h-1zM401 272h1v1h-1zM402 273h1v1h-1zM403 274h1v1h-1zM404 273h1v1h-1zM405 272h1v1h-1zM406 273h1v1h-1zM407 274h1v1h-1zM408 273h1v1h-1zM409 272h1v1h-1zM410 273h1v1h-1zM411 274h1v1h-1zM412 273h1v1h-1zM413 272h1v1h-1zM414 273h1v1h-1zM415 274h1v1h-1zM416 273h1v1h-1zM417 272h1v1h-1zM418 273h1v1h-1zM419 274h1v1h-1zM420 273h1v1h-1zM421 272h1v1h-1zM422 273h1v1h-1zM423 274h1v1h-1zM424 273h1v1h-1zM425 272h1v1h-1zM426 273h1v1h-1zM427 274h1v1h-1zM428 273h1v1h-1zM429 272h1v1h-1zM430 273h1v1h-1zM431 274h1v1h-1zM432 273h1v1h-1zM433 272h1v1h-1zM434 273h1v1h-1zM435 274h1v1h-1zM436 273h1v1h-1zM437 272h1v1h-1zM438 273h1v1h-1zM439 274h1v1h-1zM440 273h1v1h-1zM441 272h1v1h-1zM442 273h1v1h-1zM443 274h1v1h-1zM444 273h1v1h-1zM445 272h1v1h-1zM446 273h1v1h-1zM447 274h1v1h-1zM448 273h1v1h-1zM449 272h1v1h-1zM450 273h1v1h-1zM451 274h1v1h-1zM452 273h1v1h-1zM453 272h1v1h-1zM454 273h1v1h-1zM455 274h1v1h-1zM456 273h1v1h-1zM457 272h1v1h-1zM458 273h1v1h-1zM459 274h1v1h-1zM460 273h1v1h-1zM461 272h1v1h-1zM462 273h1v1h-1z" fill="#e0b040" shape-rendering="crispEdges"/>
<path d="M439 291h1v1h-1zM440 290h1v1h-1zM441 289h1v1h-1zM442 290h1v1h-1zM443 291h1v1h-1zM444 290h1v1h-1zM445 289h1v1h-1zM446 290h1v1h-1zM447 291h1v1h-1zM448 290h1v1h-1zM449 289h1v1h-1zM450 290h1v1h-1zM451 291h1v1h-1zM452 290h1v1h-1zM453 289h1v1h-1zM454 290h1v1h-1zM455 291h1v1h-1zM456 290h1v1h-1zM457 289h1v1h-1zM458 290h1v1h-1zM459 291h1v1h-1zM460 290h1v1h-1zM461 289h1v1h-1zM462 290h1v1h-1z" fill="#c02858" shape-rendering="crispEdges"/>
<path d="M343 342h1v1h-1zM344 341h1v1h-1zM345 340h1v1h-1zM346 341h1v1h-1zM347 342h1v1h-1zM348 341h1v1h-1zM349 340h1v1h-1zM350 341h1v1h-1zM351 342h1v1h-1zM352 341h1v1h-1zM353 340h1v1h-1zM354 341h1v1h-1zM355 342h1v1h-1zM356 341h1v1h-1zM357 340h1v1h-1zM358 341h1v1h-1zM359 342h1v1h-1zM360 341h1v1h-1zM361 340h1v1h-1zM362 341h1v1h-1zM363 342h1v1h-1zM364 341h1v1h-1zM365 340h1v1h-1zM366 341h1v1h-1zM367 342h1v1h-1zM368 341h1v1h-1zM369 340h1v1h-1zM370 341h1v1h-1zM371 342h1v1h-1zM372 341h1v1h-1zM373 340h1v1h-1zM374 341h1v1h-1z" fill="#c02858" shape-rendering="crispEdges"/>
<path d="M591 342h1v1h-1zM592 341h1v1h-1zM593 340h1v1h-1zM594 341h1v1h-1zM595 342h1v1h-1zM596 341h1v1h-1zM597 340h1v1h-1zM598 341h1v1h-1zM599 342h1v1h-1zM600 341h1v1h-1zM601 340h1v1h-1zM602 341h1v1h-1zM603 342h1v1h-1zM604 341h1v1h-1zM605 340h1v1h-1zM606 341h1v1h-1zM607 342h1v1h-1zM608 341h1v1h-1zM609 340h1v1h-1zM610 341h1v1h-1zM611 342h1v1h-1zM612 341h1v1h-1zM613 340h1v1h-1zM614 341h1v1h-1zM615 342h1v1h-1zM616 341h1v1h-1zM617 340h1v1h-1zM618 341h1v1h-1zM619 342h1v1h-1zM620 341h1v1h-1zM621 340h1v1h-1zM622 341h1v1h-1z" fill="#c02858" shape-rendering="crispEdges"/>
</svg>

<div class="t tab" style="left:28px;top:97px">Project Explorer</div>
<div class="t" style="left:39px;top:181px">HelloWorld</div>
<div class="t" style="left:50px;top:204px">Binaries</div>
<div class="t" style="left:50px;top:227px">src</div>
<div class="t" style="left:61px;top:250px">HelloWorld.cpp</div>
<div class="t" style="left:50px;top:273px">Debug</div>

<div class="t tab" style="left:301px;top:97px">HelloWorld.cpp</div>
<div class="code ln" style="left:292px;top:123px;width:16px;text-align:right">1
2
3
4
5
6
7
8
9
10
11
12
13
14
15</div>
<div class="code" style="left:311px;top:123px"><span class="cm">//============================================================================
// Name        : HelloWorld.cpp
// Author      :
// Version     :
// Copyright   : Your copyright notice
// Description : Hello World in C++, <span class="sq">Ansi</span>-style
//============================================================================</span>

<span class="sqy"><span class="kw">#include</span> <span class="st">&lt;iostream&gt;</span></span>
<span class="kw">using</span> <span class="kw">namespace</span> <span class="sq">std</span>;

<span class="kw">int</span> <span class="b">main</span>() {
    <span class="sq">cout</span> &lt;&lt; <span class="st">"!!!Hello World!!!"</span> &lt;&lt; <span class="sq">endl</span>; <span class="cm">// prints !!!Hello World!!!</span>
    <span class="kw">return</span> 0;
}</div>

<div class="t tab" style="left:1061px;top:97px">Outlin</div>
<div class="t tab" style="left:1169px;top:97px">Make</div>
<div class="t" style="left:1078px;top:158px">iostream</div>
<div class="t" style="left:1078px;top:181px">std</div>
<div class="t" style="left:1078px;top:204px">main() <span style="color:#a08c60">: int</span></div>

<div class="t" style="left:280px;top:433px">CDT Build Console [HelloWorld]</div>
<div class="t tab" style="left:301px;top:407px">Problems</div>
<div class="t tab" style="left:394px;top:407px">Tasks</div>
<div class="t tab" style="left:459px;top:407px;color:#111">Console</div>
<div class="t tab" style="left:578px;top:407px">Properties</div>
<div class="t tab" style="left:678px;top:407px">Valgrind</div>
<div class="t tab" style="left:763px;top:407px">Search</div>
<div class="code" style="left:282px;top:469px">**** Build of configuration Debug for project HelloWorld ****

make all
Building file: ../src/HelloWorld.cpp
Invoking: GCC C++ Compiler
g++ -O0 -g3 -Wall -c -fmessage-length=0 -MMD -MP -MF"src/HelloWorld.d" -MT"src/HelloWorld.d" -o "src/HelloWorld.o" "../
src/HelloWorld.cpp"
Finished building: ../src/HelloWorld.cpp

Building target: HelloWorld
Invoking: GCC C++ Linker
g++  -o "HelloWorld"  ./src/HelloWorld.o
Finished building target: HelloWorld


**** Build Finished ****</div>
<div class="a" style="left:283px;top:740px;width:1px;height:17px;background:#000"></div>

</body></html>
